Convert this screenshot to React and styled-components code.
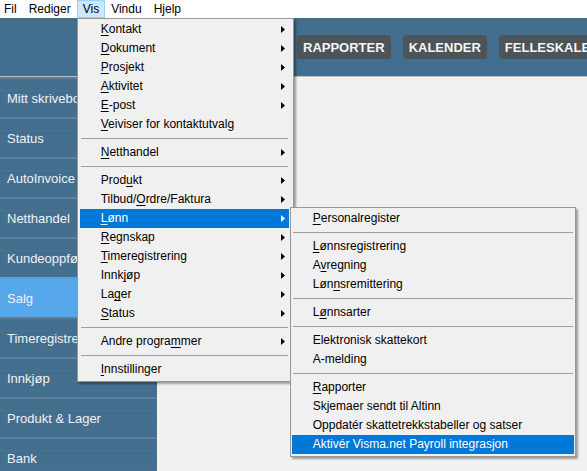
import React from "react";
import styled, { createGlobalStyle } from "styled-components";

const GlobalStyle = createGlobalStyle`
  html, body {
    margin: 0;
    padding: 0;
    overflow: hidden;
  }
  * {
    box-sizing: border-box;
  }
`;

const Window = styled.div`
  width: 100vw;
  height: 100vh;
  display: flex;
  flex-direction: column;
  font-family: "Liberation Sans", Arial, sans-serif;
  overflow: hidden;
  background: #f1f1f0;
`;

const MenuBar = styled.div`
  height: 18px;
  background: #fff;
  display: flex;
  align-items: stretch;
  position: relative;
  z-index: 10;
  font-size: 12px;
  color: #000;
`;

const MenuBarItem = styled.div`
  position: relative;
  display: flex;
  align-items: center;
  padding: 0 5px;
  border: 1px solid ${(p) => (p.$open ? "#99d1ff" : "transparent")};
  background: ${(p) => (p.$open ? "#cce8ff" : "transparent")};
  &:first-child {
    padding-left: 3px;
  }
`;

const Workspace = styled.div`
  flex: 1;
  display: flex;
  flex-direction: column;
  min-height: 0;
`;

const Header = styled.div`
  height: 59px;
  flex-shrink: 0;
  background: #416e8e;
  border-bottom: 1px solid #b9c0c5;
  display: flex;
  align-items: center;
  column-gap: 12px;
  padding-left: 297px;
  overflow: hidden;
`;

const NavButton = styled.div`
  flex-shrink: 0;
  height: 24px;
  padding: 0 6px;
  border-radius: 4px;
  background: #4c5458;
  color: #f4f6f7;
  font-weight: bold;
  font-size: 13px;
  display: flex;
  align-items: center;
  white-space: nowrap;
`;

const Body = styled.div`
  flex: 1;
  display: flex;
  min-height: 0;
`;

const Sidebar = styled.div`
  width: 157px;
  flex-shrink: 0;
  background: repeating-linear-gradient(
    180deg,
    #446f8e 0px,
    #436d8c 2px,
    #47718f 3px,
    #446e8d 5px
  );
  display: flex;
  flex-direction: column;
`;

const SideItem = styled.div`
  height: 40px;
  flex-shrink: 0;
  border-top: 2px solid ${(p) => (p.$active ? "#5a9fd6" : "#5a809e")};
  background: ${(p) => (p.$active ? "#57a8eb" : "transparent")};
  color: #eef3f6;
  font-size: 13px;
  display: flex;
  align-items: center;
  padding-left: 7px;
  white-space: nowrap;
  overflow: hidden;
`;

const Content = styled.div`
  flex: 1;
  background: #f1f1f0;
`;

const Menu = styled.div`
  position: absolute;
  top: ${(p) => p.$top || "calc(100% + 1px)"};
  left: ${(p) => p.$left || "-1px"};
  width: ${(p) => p.$width}px;
  background: #f0f0f0;
  border: 1px solid #979797;
  padding: ${(p) => p.$pad};
  box-shadow: 2px 2px 2px rgba(0, 0, 0, 0.35);
  font-size: 12px;
  line-height: 15px;
  color: #000;
  z-index: 20;
`;

const Row = styled.div`
  position: relative;
  height: 19px;
  display: flex;
  align-items: center;
  padding-left: 21px;
  padding-right: 4px;
  white-space: nowrap;
  background: ${(p) => (p.$hl ? "#0078d7" : "transparent")};
  color: ${(p) => (p.$hl ? "#fff" : "#000")};
`;

const Label = styled.span`
  flex: 1;
`;

const Mn = styled.span`
  text-decoration: underline;
  text-underline-offset: 2px;
`;

const Separator = styled.div`
  height: 9px;
  display: flex;
  align-items: center;
  padding: 0 1px;
  &::after {
    content: "";
    flex: 1;
    height: 1px;
    background: #a0a0a0;
  }
`;

const Arrow = ({ color }) => (
  <svg width="4" height="7" viewBox="0 0 4 7">
    <path d="M0 0 L4 3.5 L0 7 Z" fill={color} />
  </svg>
);

const Text = ({ label, k }) => {
  if (k === undefined || k < 0) return <Label>{label}</Label>;
  return (
    <Label>
      {label.slice(0, k)}
      <Mn>{label[k]}</Mn>
      {label.slice(k + 1)}
    </Label>
  );
};

const visMenu = [
  { label: "Kontakt", k: 0, sub: true },
  { label: "Dokument", k: 0, sub: true },
  { label: "Prosjekt", k: 0, sub: true },
  { label: "Aktivitet", k: 0, sub: true },
  { label: "E-post", k: 0, sub: true },
  { label: "Veiviser for kontaktutvalg", k: 0 },
  "sep",
  { label: "Netthandel", k: 0, sub: true },
  "sep",
  { label: "Produkt", k: 4, sub: true },
  { label: "Tilbud/Ordre/Faktura", k: 7, sub: true },
  { label: "Lønn", k: 0, sub: true, open: true },
  { label: "Regnskap", k: 0, sub: true },
  { label: "Timeregistrering", k: 0, sub: true },
  { label: "Innkjøp", k: 4, sub: true },
  { label: "Lager", k: 2, sub: true },
  { label: "Status", k: 0, sub: true },
  "sep",
  { label: "Andre programmer", k: 12, sub: true },
  "sep",
  { label: "Innstillinger", k: 0 },
];

const lonnMenu = [
  { label: "Personalregister", k: 0 },
  "sep",
  { label: "Lønnsregistrering", k: 0 },
  { label: "Avregning", k: 1 },
  { label: "Lønnsremittering", k: 3 },
  "sep",
  { label: "Lønnsarter", k: 1 },
  "sep",
  { label: "Elektronisk skattekort" },
  { label: "A-melding" },
  "sep",
  { label: "Rapporter", k: 0 },
  { label: "Skjemaer sendt til Altinn" },
  { label: "Oppdatér skattetrekkstabeller og satser" },
  { label: "Aktivér Visma.net Payroll integrasjon", hl: true },
];

const LonnMenu = () => (
  <Menu $top="-2px" $left="calc(100% + 1px)" $width={286} $pad="1px 1px 2px 1px">
    {lonnMenu.map((it, i) =>
      it === "sep" ? (
        <Separator key={i} />
      ) : (
        <Row key={i} $hl={it.hl}>
          <Text label={it.label} k={it.k} />
        </Row>
      )
    )}
  </Menu>
);

const VisMenu = () => (
  <Menu $width={217} $pad="1px 4px 2px 2px">
    {visMenu.map((it, i) =>
      it === "sep" ? (
        <Separator key={i} />
      ) : (
        <Row key={i} $hl={it.open}>
          <Text label={it.label} k={it.k} />
          {it.sub && <Arrow color={it.open ? "#fff" : "#000"} />}
          {it.open && <LonnMenu />}
        </Row>
      )
    )}
  </Menu>
);

const sideItems = [
  "Mitt skrivebord",
  "Status",
  "AutoInvoice",
  "Netthandel",
  "Kundeoppfølging",
  "Salg",
  "Timeregistrering",
  "Innkjøp",
  "Produkt & Lager",
  "Bank",
];

const App = () => {
  return (
    <>
      <GlobalStyle />
      <Window>
        <MenuBar>
          <MenuBarItem>Fil</MenuBarItem>
          <MenuBarItem>Rediger</MenuBarItem>
          <MenuBarItem $open>
            Vis
            <VisMenu />
          </MenuBarItem>
          <MenuBarItem>Vindu</MenuBarItem>
          <MenuBarItem>Hjelp</MenuBarItem>
        </MenuBar>
        <Workspace>
          <Header>
            <NavButton>RAPPORTER</NavButton>
            <NavButton>KALENDER</NavButton>
            <NavButton>FELLESKALENDER</NavButton>
          </Header>
          <Body>
            <Sidebar>
              {sideItems.map((s) => (
                <SideItem key={s} $active={s === "Salg"}>
                  {s}
                </SideItem>
              ))}
            </Sidebar>
            <Content />
          </Body>
        </Workspace>
      </Window>
    </>
  );
};

export default App;
